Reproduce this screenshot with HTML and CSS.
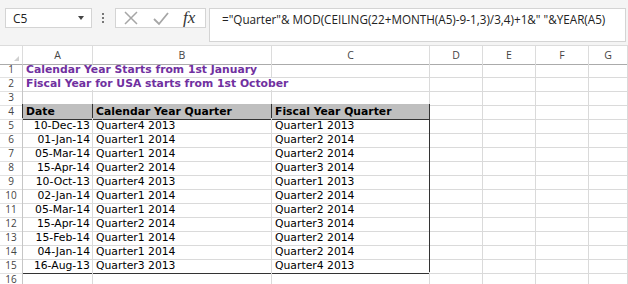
FILE: index.html
```
<!DOCTYPE html>
<html>
<head>
  <title>Fiscal Year Quarter</title>
  <link rel="stylesheet" href="styles.css">
</head>
<body>
  <div class="toolbar">
    <div class="namebox">
      <span>C5</span>
      <span class="caret"></span>
    </div>
    <div class="grip"><i></i><i></i><i></i></div>
    <div class="fxbox">
      <svg width="16" height="16" viewBox="0 0 16 16"><path d="M2 2 L14 14 M14 2 L2 14" stroke="#a6a6a6" stroke-width="1.5" fill="none"/></svg>
      <svg width="18" height="16" viewBox="0 0 18 16"><path d="M2 9 L7 14 L16 3" stroke="#a6a6a6" stroke-width="1.8" fill="none"/></svg>
      <span class="fx">fx</span>
    </div>
    <div class="formula">="Quarter"&amp; MOD(CEILING(22+MONTH(A5)-9-1,3)/3,4)+1&amp;" "&amp;YEAR(A5)</div>
  </div>

  <div class="sheet">
    <div class="row head">
      <div class="corner"></div>
      <div>A</div><div>B</div><div>C</div><div>D</div><div>E</div><div>F</div><div>G</div>
    </div>
    <div class="row">
      <div class="rh">1</div>
      <div class="note span2">Calendar Year Starts from 1st January</div>
      <div></div><div></div><div></div><div></div><div></div>
    </div>
    <div class="row">
      <div class="rh">2</div>
      <div class="note span3">Fiscal Year for USA starts from 1st October</div>
      <div></div><div></div><div></div><div></div>
    </div>
    <div class="row">
      <div class="rh">3</div>
      <div class="top"></div><div class="top"></div><div class="top"></div>
      <div></div><div></div><div></div><div></div>
    </div>
    <div class="row">
      <div class="rh edge">4</div>
      <div class="th">Date</div><div class="th">Calendar Year Quarter</div><div class="th">Fiscal Year Quarter</div>
      <div></div><div></div><div></div><div></div>
    </div>
    <div class="row">
      <div class="rh">5</div>
      <div class="date">10-Dec-13</div><div>Quarter4 2013</div><div class="last">Quarter1 2013</div>
      <div></div><div></div><div></div><div></div>
    </div>
    <div class="row">
      <div class="rh">6</div>
      <div class="date">01-Jan-14</div><div>Quarter1 2014</div><div class="last">Quarter2 2014</div>
      <div></div><div></div><div></div><div></div>
    </div>
    <div class="row">
      <div class="rh">7</div>
      <div class="date">05-Mar-14</div><div>Quarter1 2014</div><div class="last">Quarter2 2014</div>
      <div></div><div></div><div></div><div></div>
    </div>
    <div class="row">
      <div class="rh">8</div>
      <div class="date">15-Apr-14</div><div>Quarter2 2014</div><div class="last">Quarter3 2014</div>
      <div></div><div></div><div></div><div></div>
    </div>
    <div class="row">
      <div class="rh">9</div>
      <div class="date">10-Oct-13</div><div>Quarter4 2013</div><div class="last">Quarter1 2013</div>
      <div></div><div></div><div></div><div></div>
    </div>
    <div class="row">
      <div class="rh">10</div>
      <div class="date">02-Jan-14</div><div>Quarter1 2014</div><div class="last">Quarter2 2014</div>
      <div></div><div></div><div></div><div></div>
    </div>
    <div class="row">
      <div class="rh">11</div>
      <div class="date">05-Mar-14</div><div>Quarter1 2014</div><div class="last">Quarter2 2014</div>
      <div></div><div></div><div></div><div></div>
    </div>
    <div class="row">
      <div class="rh">12</div>
      <div class="date">15-Apr-14</div><div>Quarter2 2014</div><div class="last">Quarter3 2014</div>
      <div></div><div></div><div></div><div></div>
    </div>
    <div class="row">
      <div class="rh">13</div>
      <div class="date">15-Feb-14</div><div>Quarter1 2014</div><div class="last">Quarter2 2014</div>
      <div></div><div></div><div></div><div></div>
    </div>
    <div class="row">
      <div class="rh">14</div>
      <div class="date">04-Jan-14</div><div>Quarter1 2014</div><div class="last">Quarter2 2014</div>
      <div></div><div></div><div></div><div></div>
    </div>
    <div class="row end">
      <div class="rh">15</div>
      <div class="date">16-Aug-13</div><div>Quarter3 2013</div><div class="last">Quarter4 2013</div>
      <div></div><div></div><div></div><div></div>
    </div>
    <div class="row">
      <div class="rh">16</div>
      <div></div><div></div><div></div><div></div><div></div><div></div><div></div>
    </div>
  </div>
</body>
</html>
```

FILE: styles.css
```
body {
  margin: 0;
  background: #fff;
  overflow: hidden;
  font-family: 'DejaVu Sans', Verdana, sans-serif;
  color: #000;
}

/* formula bar */
.toolbar {
  display: flex;
  align-items: flex-start;
  height: 46px;
  padding: 8px 0 0 5px;
  box-sizing: border-box;
  background: #f4f4f4;
  border-bottom: 1px solid #dcdcdc;
  font-family: 'Open Sans', sans-serif;
}
.namebox {
  display: flex;
  align-items: center;
  justify-content: space-between;
  width: 87px;
  height: 20px;
  box-sizing: border-box;
  padding: 0 7px 0 7px;
  background: #fff;
  border: 1px solid #d4d4d4;
  font-size: 12px;
  color: #222;
}
.caret {
  width: 0;
  height: 0;
  border-left: 3px solid transparent;
  border-right: 3px solid transparent;
  border-top: 4px solid #444;
}
.grip {
  display: flex;
  flex-direction: column;
  gap: 2px;
  margin: 5px 11px 0 10px;
}
.grip i {
  display: block;
  width: 2px;
  height: 2px;
  background: #777;
}
.fxbox {
  display: flex;
  align-items: center;
  gap: 13px;
  width: 91px;
  height: 20px;
  box-sizing: border-box;
  padding-left: 7px;
  background: #fff;
  border: 1px solid #d4d4d4;
}
.fx {
  font-family: 'Liberation Serif', serif;
  font-style: italic;
  font-size: 17px;
  color: #333;
  line-height: 18px;
}
.formula {
  flex: 1;
  height: 34px;
  margin: 0 2px 0 3px;
  box-sizing: border-box;
  padding: 2px 0 0 12px;
  background: #fff;
  border: 1px solid #d4d4d4;
  font-size: 11.7px;
  color: #222;
  white-space: nowrap;
}

/* grid */
.row {
  display: grid;
  grid-template-columns: 23px 70px 179px 158px 53px 53px 53px 1fr;
  height: 14px;
}
.row > div {
  box-sizing: border-box;
  border-right: 1px solid #dadada;
  border-bottom: 1px solid #dadada;
  font-size: 10.8px;
  line-height: 15px;
  padding-left: 3px;
  white-space: nowrap;
}
.row.head {
  height: 16px;
}
.row.head > div {
  font-family: 'Open Sans', sans-serif;
  font-size: 10.5px;
  line-height: 18px;
  text-align: center;
  color: #444;
  padding: 0;
  border-right-color: #dcdcdc;
  border-bottom-color: #ababab;
}
.row.head > .corner {
  position: relative;
}
.corner::after {
  content: "";
  position: absolute;
  right: 3px;
  bottom: 3px;
  border-left: 5px solid transparent;
  border-bottom: 5px solid #d0d0d0;
}
.row > .rh {
  font-family: 'Open Sans', sans-serif;
  font-size: 10px;
  line-height: 15px;
  text-align: center;
  padding: 0;
  color: #444;
  border-right-color: #c6c6c6;
  border-bottom-color: #e2e2e2;
}
.row > .note {
  color: #7030a0;
  font-weight: bold;
  padding-left: 3px;
}
.span2 {
  grid-column: span 2;
}
.span3 {
  grid-column: span 3;
}
.row > .top {
  border-bottom-color: #333;
}
.row > .th {
  background: #bfbfbf;
  font-weight: bold;
  border-right-color: #333;
  border-bottom-color: #333;
}
.row > .edge {
  border-right-color: #333;
}
.row > .date {
  text-align: right;
  padding: 0 2px 0 0;
}
.row > .last {
  border-right-color: #333;
}
.row.end > div:nth-child(n+2):nth-child(-n+4) {
  border-bottom-color: #333;
}
```
